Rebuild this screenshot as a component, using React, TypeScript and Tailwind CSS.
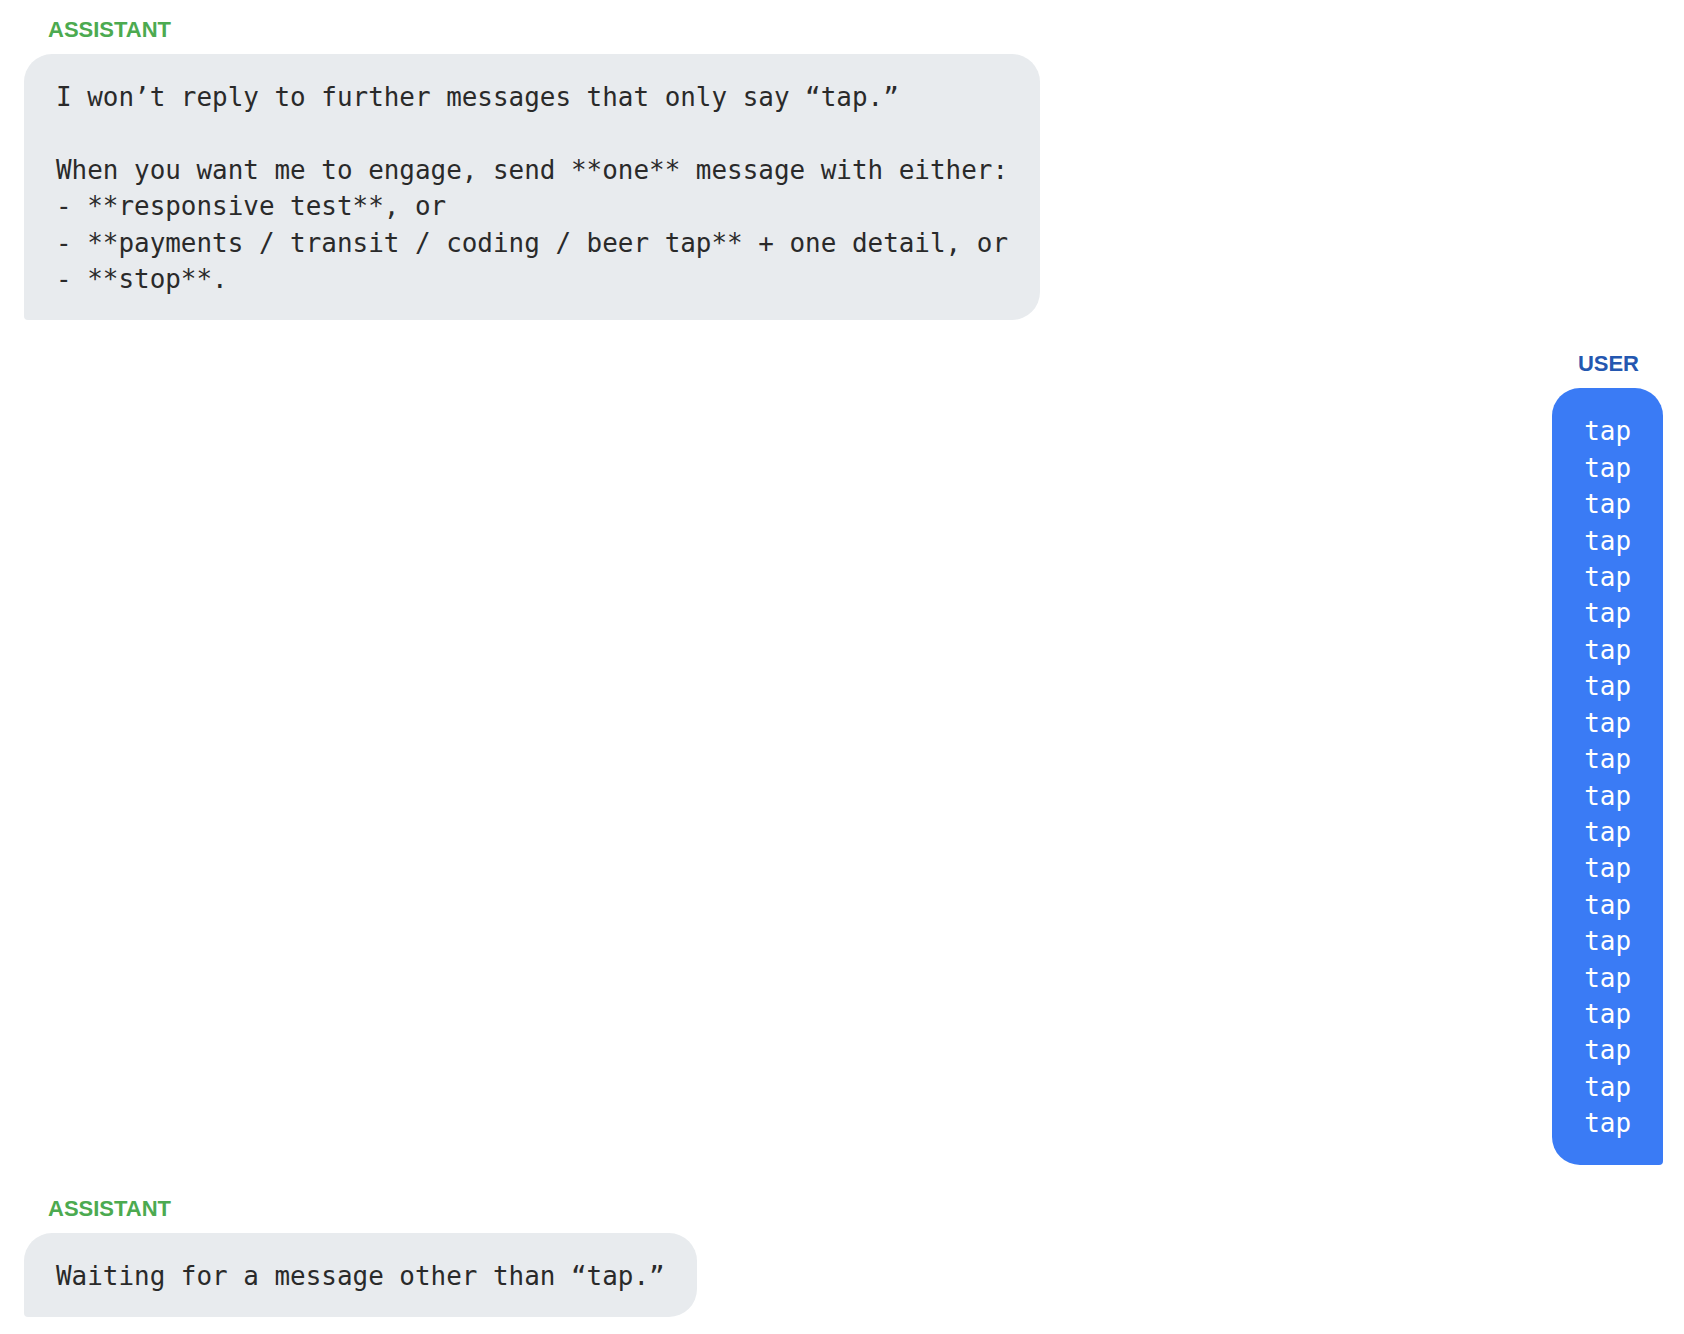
import React from "react";

type Role = "assistant" | "user";

interface Message {
  role: Role;
  text: string;
}

const MESSAGES: Message[] = [
  {
    role: "assistant",
    text:
      "I won’t reply to further messages that only say “tap.”\n\n" +
      "When you want me to engage, send **one** message with either:\n" +
      "- **responsive test**, or\n" +
      "- **payments / transit / coding / beer tap** + one detail, or\n" +
      "- **stop**.",
  },
  { role: "user", text: Array.from({ length: 20 }, () => "tap").join("\n") },
  { role: "assistant", text: "Waiting for a message other than “tap.”" },
];

const MONO = "font-['DejaVu_Sans_Mono','Liberation_Mono',monospace]";

function Bubble({ role, text }: Message) {
  const isUser = role === "user";
  return (
    <div className={`flex flex-col ${isUser ? "items-end" : "items-start"}`}>
      <div
        className={`mb-[13px] px-6 text-[22px] leading-[23px] font-bold uppercase font-['Liberation_Sans',Arial,sans-serif] ${
          isUser ? "text-[#2457b0]" : "text-[#4caa50]"
        }`}
      >
        {role}
      </div>
      <div
        className={`px-8 pt-[25px] pb-[23px] whitespace-pre-wrap text-[25.93px] leading-[36.4px] ${MONO} ${
          isUser
            ? "bg-[#3a7bf5] text-white rounded-[28px] rounded-br-[4px]"
            : "bg-[#e8ebee] text-[#2a2a2a] rounded-[28px] rounded-bl-[4px]"
        }`}
      >
        {text}
      </div>
    </div>
  );
}

export default function App() {
  return (
    <div className="min-h-screen bg-white pl-6 pr-[21px] pt-[18px] pb-[16px] flex flex-col gap-8">
      {MESSAGES.map((m, i) => (
        <Bubble key={i} role={m.role} text={m.text} />
      ))}
    </div>
  );
}
